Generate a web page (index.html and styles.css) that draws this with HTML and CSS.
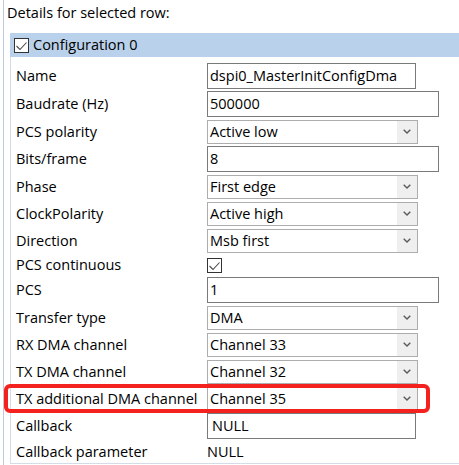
FILE: index.html
```html
<!DOCTYPE html>
<html>
<head>
<meta charset="utf-8">
<link rel="stylesheet" href="styles.css">
</head>
<body>
<div class="window">
  <div class="title">Details for selected row:</div>
  <div class="group">
    <div class="group-header">
      <span class="check"><svg width="15" height="15" viewBox="0 0 15 15"><polyline points="2.5,8 6,11.5 12.5,4.5" fill="none" stroke="#4a4a4a" stroke-width="1.1"/></svg></span>
      <span class="header-text">Configuration 0</span>
    </div>
    <div class="group-body">
      <div class="row h28"><div class="label">Name</div><div class="value"><div class="textbox w-short">dspi0_MasterInitConfigDma</div></div></div>
      <div class="row h28"><div class="label">Baudrate (Hz)</div><div class="value"><div class="textbox w-long">500000</div></div></div>
      <div class="row h27"><div class="label">PCS polarity</div><div class="value"><div class="combo"><span class="combo-text">Active low</span><span class="combo-btn"><svg width="8" height="5" viewBox="0 0 8 5"><polyline points="0.7,0.7 4,4 7.3,0.7" fill="none" stroke="#5a5a5a" stroke-width="1.4"/></svg></span></div></div></div>
      <div class="row h28"><div class="label">Bits/frame</div><div class="value"><div class="textbox w-long">8</div></div></div>
      <div class="row h27"><div class="label">Phase</div><div class="value"><div class="combo"><span class="combo-text">First edge</span><span class="combo-btn"><svg width="8" height="5" viewBox="0 0 8 5"><polyline points="0.7,0.7 4,4 7.3,0.7" fill="none" stroke="#5a5a5a" stroke-width="1.4"/></svg></span></div></div></div>
      <div class="row h27"><div class="label">ClockPolarity</div><div class="value"><div class="combo"><span class="combo-text">Active high</span><span class="combo-btn"><svg width="8" height="5" viewBox="0 0 8 5"><polyline points="0.7,0.7 4,4 7.3,0.7" fill="none" stroke="#5a5a5a" stroke-width="1.4"/></svg></span></div></div></div>
      <div class="row h27"><div class="label">Direction</div><div class="value"><div class="combo"><span class="combo-text">Msb first</span><span class="combo-btn"><svg width="8" height="5" viewBox="0 0 8 5"><polyline points="0.7,0.7 4,4 7.3,0.7" fill="none" stroke="#5a5a5a" stroke-width="1.4"/></svg></span></div></div></div>
      <div class="row h22"><div class="label">PCS continuous</div><div class="value"><span class="check"><svg width="15" height="15" viewBox="0 0 15 15"><polyline points="2.5,8 6,11.5 12.5,4.5" fill="none" stroke="#4a4a4a" stroke-width="1.1"/></svg></span></div></div>
      <div class="row h28"><div class="label">PCS</div><div class="value"><div class="textbox w-long">1</div></div></div>
      <div class="row h27"><div class="label">Transfer type</div><div class="value"><div class="combo"><span class="combo-text">DMA</span><span class="combo-btn"><svg width="8" height="5" viewBox="0 0 8 5"><polyline points="0.7,0.7 4,4 7.3,0.7" fill="none" stroke="#5a5a5a" stroke-width="1.4"/></svg></span></div></div></div>
      <div class="row h27"><div class="label">RX DMA channel</div><div class="value"><div class="combo"><span class="combo-text">Channel 33</span><span class="combo-btn"><svg width="8" height="5" viewBox="0 0 8 5"><polyline points="0.7,0.7 4,4 7.3,0.7" fill="none" stroke="#5a5a5a" stroke-width="1.4"/></svg></span></div></div></div>
      <div class="row h27"><div class="label">TX DMA channel</div><div class="value"><div class="combo"><span class="combo-text">Channel 32</span><span class="combo-btn"><svg width="8" height="5" viewBox="0 0 8 5"><polyline points="0.7,0.7 4,4 7.3,0.7" fill="none" stroke="#5a5a5a" stroke-width="1.4"/></svg></span></div></div></div>
      <div class="row h27 highlighted"><div class="label">TX additional DMA channel</div><div class="value"><div class="combo"><span class="combo-text">Channel 35</span><span class="combo-btn"><svg width="8" height="5" viewBox="0 0 8 5"><polyline points="0.7,0.7 4,4 7.3,0.7" fill="none" stroke="#5a5a5a" stroke-width="1.4"/></svg></span></div></div><div class="highlight"></div></div>
      <div class="row h28"><div class="label">Callback</div><div class="value"><div class="textbox w-short cb">NULL</div></div></div>
      <div class="row h23"><div class="label">Callback parameter</div><div class="value plain">NULL</div></div>
    </div>
  </div>
</div>
</body>
</html>
```

FILE: styles.css
```css
html, body {
  margin: 0;
  padding: 0;
  background: #ffffff;
}
body {
  width: 459px;
  height: 465px;
  overflow: hidden;
  font-family: "Open Sans", "Noto Sans", sans-serif;
  font-size: 14.5px;
  color: #000000;
}
.window {
  margin-left: 3px;
  height: 465px;
  border-left: 1px solid #bccadb;
  box-sizing: border-box;
}
.title {
  height: 20px;
  line-height: 20px;
  padding-top: 3px;
  padding-left: 3px;
}
.group {
  margin-top: 10px;
  margin-left: 6px;
}
.group-header {
  height: 24px;
  background: #b9d1ea;
  display: flex;
  align-items: center;
  padding-left: 4px;
  gap: 4px;
}
.header-text {
  line-height: 20px;
}
.check {
  display: block;
  width: 15px;
  height: 15px;
  box-sizing: border-box;
  border: 1px solid #333333;
  background: #ffffff;
  position: relative;
}
.check svg {
  display: block;
  margin: -1px 0 0 -1px;
}
.group-body {
  border-left: 1px solid #d3dce7;
  border-bottom: 1px solid #d3dce7;
  padding-top: 5px;
}
.row {
  display: grid;
  grid-template-columns: 191px 1fr;
  padding-left: 5px;
  align-items: center;
}
.h28 { height: 28px; }
.h27 { height: 27px; }
.h23 { height: 23px; }
.h22 { height: 22px; }
.label {
  line-height: 20px;
  white-space: nowrap;
}
.value {
  display: flex;
  align-items: center;
}
.textbox {
  height: 26px;
  box-sizing: border-box;
  border: 1px solid #7a7a7a;
  padding-left: 2px;
  line-height: 24px;
  white-space: nowrap;
}
.w-short { width: 209px; }
.w-long { width: 232px; }
.textbox.cb { padding-left: 4px; }
.combo {
  width: 211px;
  height: 24px;
  box-sizing: border-box;
  border: 1px solid #adadad;
  display: flex;
  align-items: stretch;
  justify-content: space-between;
}
.combo-text {
  padding-left: 2px;
  line-height: 22px;
  white-space: nowrap;
}
.combo-btn {
  width: 20px;
  margin: 0 0 0 0;
  background: #efefef;
  display: flex;
  align-items: center;
  justify-content: center;
}
.combo-btn svg {
  display: block;
}
.plain {
  line-height: 20px;
}
.highlighted {
  position: relative;
}
.highlight {
  position: absolute;
  left: -7px;
  top: -1px;
  width: 426px;
  height: 29px;
  box-sizing: border-box;
  border: 4px solid #f3221f;
  border-radius: 6px;
  pointer-events: none;
}
```
